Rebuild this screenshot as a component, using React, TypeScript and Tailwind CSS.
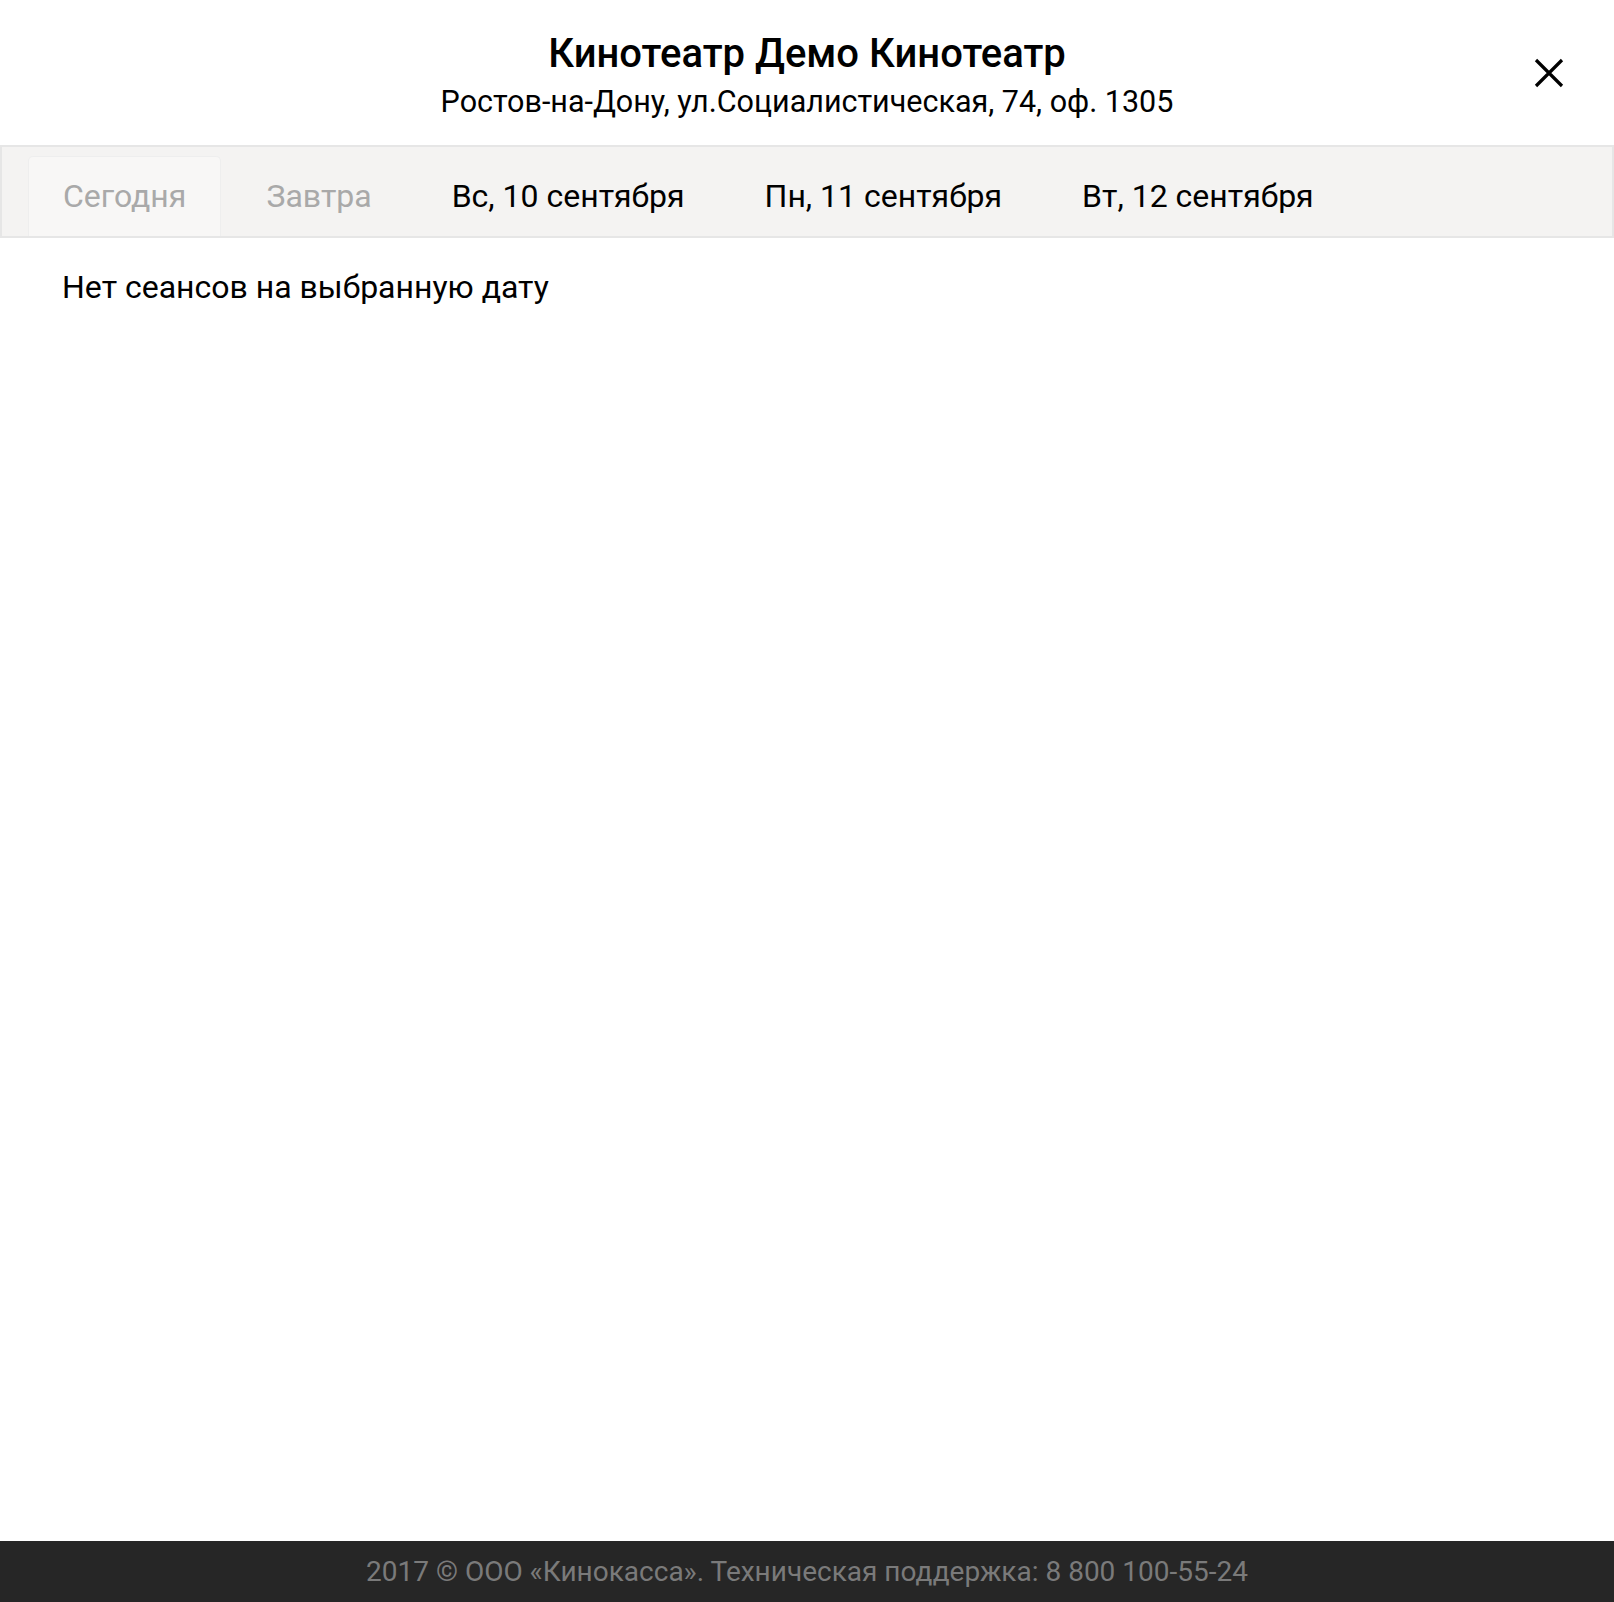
const TABS = [
  { label: "Сегодня", active: true, muted: true },
  { label: "Завтра", active: false, muted: true },
  { label: "Вс, 10 сентября", active: false, muted: false },
  { label: "Пн, 11 сентября", active: false, muted: false },
  { label: "Вт, 12 сентября", active: false, muted: false },
];

function CloseIcon() {
  return (
    <svg width="30" height="30" viewBox="0 0 30 30" fill="none">
      <path d="M2 2L28 28M28 2L2 28" stroke="#000" strokeWidth="3.2" />
    </svg>
  );
}

export default function App() {
  return (
    <div
      className="flex min-h-[1602px] flex-col bg-white text-black"
      style={{ fontFamily: "Roboto, 'Liberation Sans', sans-serif" }}
    >
      <header className="relative flex h-[145px] flex-col items-center pt-[30px]">
        <h1 className="text-[40px] leading-[48px] font-medium">
          Кинотеатр Демо Кинотеатр
        </h1>
        <p className="mt-[2px] text-[30.5px] leading-[44px]">
          Ростов-на-Дону, ул.Социалистическая, 74, оф. 1305
        </p>
        <button className="absolute top-[58px] right-[50px]" aria-label="Закрыть">
          <CloseIcon />
        </button>
      </header>

      <nav className="flex h-[93px] items-end gap-[10px] border-2 border-[#e6e6e6] bg-[#f4f3f2] pl-[26px]">
        {TABS.map((tab) => (
          <div
            key={tab.label}
            className={
              tab.active
                ? "flex h-[80px] items-center rounded-t-[5px] border border-b-0 border-[#eeeeee] bg-[#f8f7f6] px-[34px] pb-[1px] text-[32px] text-[#a9a9a9]"
                : tab.muted
                  ? "flex h-[80px] items-center px-[35px] pb-[1px] text-[32px] text-[#a9a9a9]"
                  : "flex h-[80px] items-center px-[35px] pb-[1px] text-[32px] text-black"
            }
          >
            {tab.label}
          </div>
        ))}
      </nav>

      <main className="flex-1 px-[62px] pt-[25px]">
        <p className="text-[32px] leading-[48px]">Нет сеансов на выбранную дату</p>
      </main>

      <footer className="flex h-[61px] items-center justify-center bg-[#262626] text-[28px] text-[#7a7a7a]">
        2017 © ООО «Кинокасса». Техническая поддержка: 8 800 100-55-24
      </footer>
    </div>
  );
}
